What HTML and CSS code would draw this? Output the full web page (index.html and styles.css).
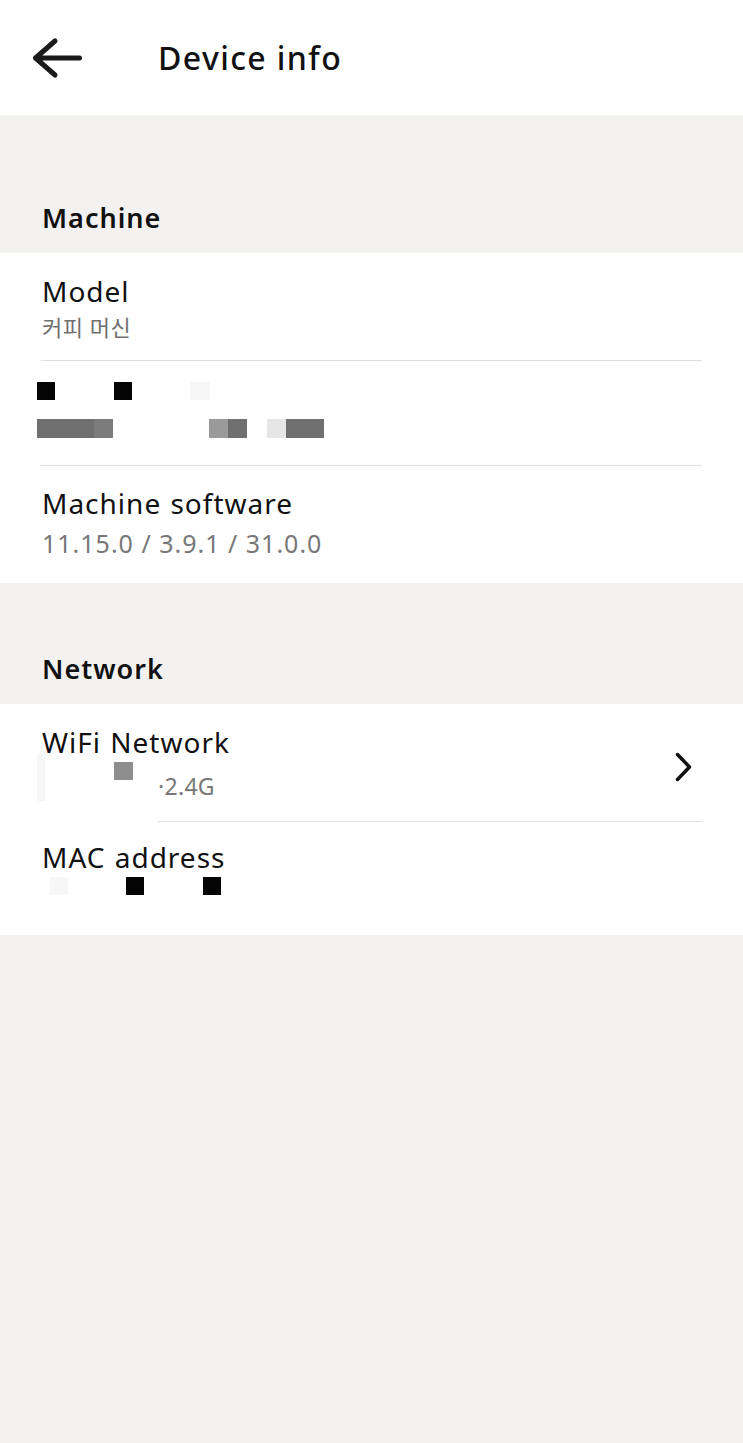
FILE: index.html
```html
<!DOCTYPE html>
<html lang="en">

<head>
    <meta charset="UTF-8">
    <meta name="viewport" content="width=device-width, initial-scale=1.0">
    <title>Device info</title>
    <link rel="stylesheet" href="styles.css">
</head>

<body>
    <div class="screen">
        <header class="topbar">
            <button class="back" aria-label="Back">
                <svg width="54" height="44" viewBox="0 0 54 44">
                    <path d="M49.5 22H5.5M25 5L5.5 22 25 39" fill="none" stroke="#1a1a1a" stroke-width="5" stroke-linecap="round" stroke-linejoin="round" />
                </svg>
            </button>
            <h1>Device info</h1>
        </header>

        <section class="group first">
            <h2>Machine</h2>
            <div class="card">
                <div class="row">
                    <div class="label">Model</div>
                    <div class="value ko">커피 머신</div>
                </div>
                <div class="row masked">
                    <div class="pix top">
                        <span class="px dark" style="left: 0; width: 18px"></span>
                        <span class="px dark" style="left: 77px; width: 18px"></span>
                        <span class="px faint" style="left: 153px; width: 20px"></span>
                    </div>
                    <div class="pix bottom">
                        <span class="px mid" style="left: 0; width: 57px"></span>
                        <span class="px mid2" style="left: 57px; width: 19px"></span>
                        <span class="px light" style="left: 172px; width: 19px"></span>
                        <span class="px mid" style="left: 191px; width: 19px"></span>
                        <span class="px pale" style="left: 230px; width: 19px"></span>
                        <span class="px mid" style="left: 249px; width: 38px"></span>
                    </div>
                </div>
                <div class="row last">
                    <div class="label">Machine software</div>
                    <div class="value version">11.15.0 / 3.9.1 / 31.0.0</div>
                </div>
            </div>
        </section>

        <section class="group">
            <h2>Network</h2>
            <div class="card">
                <div class="row link">
                    <div class="link-text">
                        <div class="label">WiFi Network</div>
                        <div class="value wifi">
                            <span class="px soft" style="left: 0; width: 8px"></span>
                            <span class="px grey" style="left: 77px; width: 19px"></span>
                            <span class="ssid">·2.4G</span>
                        </div>
                    </div>
                    <svg class="chevron" width="22" height="32" viewBox="0 0 22 32">
                        <path d="M4.5 3.5L16.5 16 4.5 28.5" fill="none" stroke="#111" stroke-width="3.5" stroke-linecap="round" stroke-linejoin="round" />
                    </svg>
                </div>
                <div class="row last mac-row">
                    <div class="label">MAC address</div>
                    <div class="pix mac">
                        <span class="px faint" style="left: 13px; width: 18px"></span>
                        <span class="px dark" style="left: 89px; width: 18px"></span>
                        <span class="px dark" style="left: 166px; width: 18px"></span>
                    </div>
                </div>
            </div>
        </section>
    </div>
</body>

</html>
```

FILE: styles.css
```css
* {
    box-sizing: border-box;
    font-family: "Noto Sans", "Noto Sans CJK KR", sans-serif;
}

body {
    margin: 0;
    background-color: #f3f2f1;
}

.screen {
    width: 743px;
    min-height: 1443px;
    background-color: #f3f2f1;
}

.topbar {
    height: 115px;
    background-color: #FFFFFF;
    display: flex;
    align-items: center;
    padding-left: 30px;
}

.back {
    border: none;
    background: none;
    padding: 0;
    width: 54px;
    height: 44px;
}

.back svg {
    display: block;
}

.topbar h1 {
    margin: 0 0 0 74px;
    font-size: 32px;
    font-weight: 500;
    color: #111;
    letter-spacing: 1.4px;
}

.group {
    padding-top: 68px;
}

.group.first {
    padding-top: 85px;
}

.group h2 {
    margin: 0;
    padding: 0 0 17px 42px;
    font-size: 27px;
    font-weight: 600;
    color: #111;
    line-height: 36px;
    letter-spacing: 1px;
}

.card {
    background-color: #FFFFFF;
    padding: 0 41px;
}

.row {
    position: relative;
    border-bottom: 1px solid #e0e0e0;
    padding: 20px 0 15px 1px;
}

.row.last {
    border-bottom: none;
}

.label {
    font-size: 28px;
    line-height: 36px;
    color: #111;
    letter-spacing: 1px;
    word-spacing: 1px;
}

.value {
    position: relative;
    font-size: 25px;
    line-height: 36px;
    color: #787878;
    letter-spacing: 1px;
}

.value.ko {
    font-size: 22px;
    letter-spacing: 0.5px;
    color: #707070;
}

.version {
    margin-top: 4px;
}

.row.last:not(.mac-row) {
    padding: 19px 0 22px 1px;
}

/* blurred-out serial rows */
.masked {
    height: 105px;
    padding: 21px 0 0 1px;
}

.pix {
    position: relative;
    left: -5px;
    height: 18px;
}

.pix.bottom {
    margin-top: 19px;
    height: 19px;
}

.px {
    position: absolute;
    top: 0;
    height: 100%;
}

.dark { background-color: #050505; }
.mid { background-color: #6f6f6f; }
.mid2 { background-color: #7b7b7b; }
.light { background-color: #9a9a9a; }
.pale { background-color: #e6e6e6; }
.faint { background-color: #f7f7f7; }
.grey { background-color: #8e8e8e; }
.soft { background-color: #f7f7f7; }

.link {
    display: flex;
    align-items: flex-start;
    justify-content: space-between;
    border-bottom: none;
    padding-bottom: 18px;
}

.link::after {
    content: "";
    position: absolute;
    left: 117px;
    right: 0;
    bottom: 0;
    height: 1px;
    background-color: #e0e0e0;
}

.wifi {
    margin-top: 8px;
    height: 36px;
    left: -5px;
}

.wifi .px.grey {
    top: -6px;
    height: 18px;
}

.wifi .px.soft {
    top: -15px;
    height: 48px;
}

.ssid {
    position: absolute;
    left: 121px;
    top: 0;
    font-size: 23px;
    letter-spacing: 0.3px;
}

.chevron {
    margin-top: 27px;
    margin-right: 7px;
}

.mac-row {
    padding: 17px 0 40px 1px;
}

.pix.mac {
    margin-top: 2px;
}
```
